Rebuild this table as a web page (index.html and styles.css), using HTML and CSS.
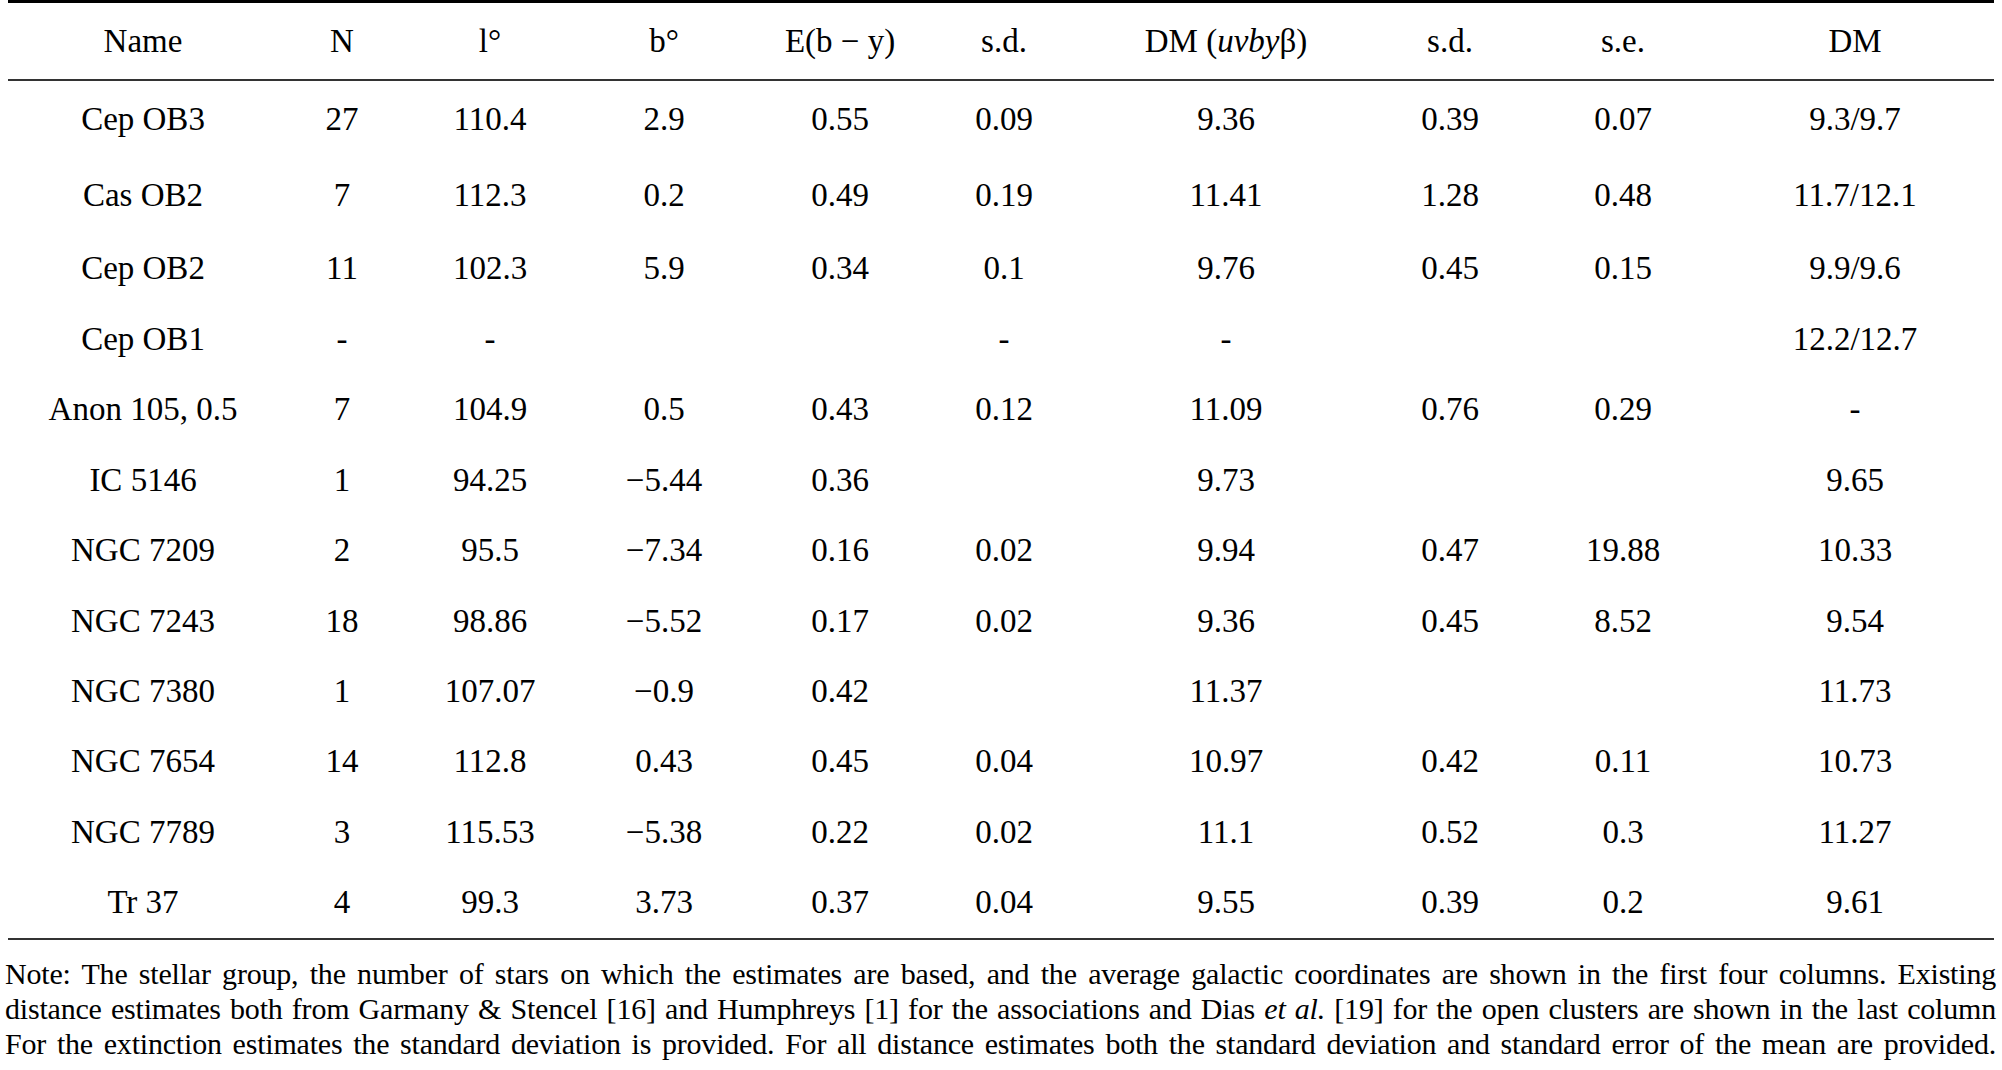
FILE: index.html
```html
<!DOCTYPE html>
<html lang="en">
<head>
<meta charset="utf-8">
<title>Table</title>
<link rel="stylesheet" href="styles.css">
</head>
<body>
<div class="page">
<table class="data">
<colgroup>
<col class="c1"><col class="c2"><col class="c3"><col class="c4"><col class="c5">
<col class="c6"><col class="c7"><col class="c8"><col class="c9"><col class="c10">
</colgroup>
<thead>
<tr><th>Name</th><th>N</th><th>l°</th><th>b°</th><th>E(b − y)</th><th>s.d.</th><th>DM (<i>uvby</i>β)</th><th>s.d.</th><th>s.e.</th><th>DM</th></tr>
</thead>
<tbody>
<tr class="r-tall"><td>Cep OB3</td><td>27</td><td>110.4</td><td>2.9</td><td>0.55</td><td>0.09</td><td>9.36</td><td>0.39</td><td>0.07</td><td>9.3/9.7</td></tr>
<tr class="r-tall"><td>Cas OB2</td><td>7</td><td>112.3</td><td>0.2</td><td>0.49</td><td>0.19</td><td>11.41</td><td>1.28</td><td>0.48</td><td>11.7/12.1</td></tr>
<tr class="r-mid"><td>Cep OB2</td><td>11</td><td>102.3</td><td>5.9</td><td>0.34</td><td>0.1</td><td>9.76</td><td>0.45</td><td>0.15</td><td>9.9/9.6</td></tr>
<tr><td>Cep OB1</td><td>-</td><td>-</td><td></td><td></td><td>-</td><td>-</td><td></td><td></td><td>12.2/12.7</td></tr>
<tr><td>Anon 105, 0.5</td><td>7</td><td>104.9</td><td>0.5</td><td>0.43</td><td>0.12</td><td>11.09</td><td>0.76</td><td>0.29</td><td>-</td></tr>
<tr><td>IC 5146</td><td>1</td><td>94.25</td><td>−5.44</td><td>0.36</td><td></td><td>9.73</td><td></td><td></td><td>9.65</td></tr>
<tr><td>NGC 7209</td><td>2</td><td>95.5</td><td>−7.34</td><td>0.16</td><td>0.02</td><td>9.94</td><td>0.47</td><td>19.88</td><td>10.33</td></tr>
<tr><td>NGC 7243</td><td>18</td><td>98.86</td><td>−5.52</td><td>0.17</td><td>0.02</td><td>9.36</td><td>0.45</td><td>8.52</td><td>9.54</td></tr>
<tr><td>NGC 7380</td><td>1</td><td>107.07</td><td>−0.9</td><td>0.42</td><td></td><td>11.37</td><td></td><td></td><td>11.73</td></tr>
<tr><td>NGC 7654</td><td>14</td><td>112.8</td><td>0.43</td><td>0.45</td><td>0.04</td><td>10.97</td><td>0.42</td><td>0.11</td><td>10.73</td></tr>
<tr><td>NGC 7789</td><td>3</td><td>115.53</td><td>−5.38</td><td>0.22</td><td>0.02</td><td>11.1</td><td>0.52</td><td>0.3</td><td>11.27</td></tr>
<tr class="last"><td>Tr 37</td><td>4</td><td>99.3</td><td>3.73</td><td>0.37</td><td>0.04</td><td>9.55</td><td>0.39</td><td>0.2</td><td>9.61</td></tr>
</tbody>
</table>
<div class="note">
<span class="line">Note: The stellar group, the number of stars on which the estimates are based, and the average galactic coordinates are shown in the first four columns. Existing</span>
<span class="line">distance estimates both from Garmany &amp; Stencel [16] and Humphreys [1] for the associations and Dias <i>et al.</i> [19] for the open clusters are shown in the last column</span>
<span class="line">For the extinction estimates the standard deviation is provided. For all distance estimates both the standard deviation and standard error of the mean are provided.</span>
</div>
</div>
</body>
</html>
```
FILE: styles.css
```css
html, body {
  margin: 0;
  padding: 0;
  background: #fff;
}
body {
  font-family: "Liberation Serif", "Times New Roman", serif;
  color: #000;
}
.page {
  width: 2002px;
  height: 1070px;
  overflow: hidden;
}
.data {
  margin-left: 8px;
  width: 1986px;
  table-layout: fixed;
  border-collapse: separate;
  border-spacing: 0;
  font-size: 33px;
}
.c1 { width: 270px; }
.c2 { width: 128px; }
.c3 { width: 168px; }
.c4 { width: 180px; }
.c5 { width: 172px; }
.c6 { width: 156px; }
.c7 { width: 288px; }
.c8 { width: 160px; }
.c9 { width: 186px; }
.c10 { width: 278px; }
.data th, .data td {
  padding: 0;
  text-align: center;
  vertical-align: middle;
  font-weight: normal;
  white-space: nowrap;
}
.data th {
  line-height: 76px;
  border-top: 3px solid #000;
  border-bottom: 2px solid #333;
}
.data td {
  line-height: 70.4px;
}
.data .r-tall td { line-height: 76px; }
.data .r-mid td { line-height: 71px; }
.data .last td { border-bottom: 2px solid #333; }
.note {
  margin: 16px 0 0 5px;
  width: 1991px;
  font-size: 30px;
  letter-spacing: -0.2px;
  line-height: 35px;
}
.note .line {
  display: block;
  text-align: justify;
  text-align-last: justify;
  white-space: normal;
}
```
